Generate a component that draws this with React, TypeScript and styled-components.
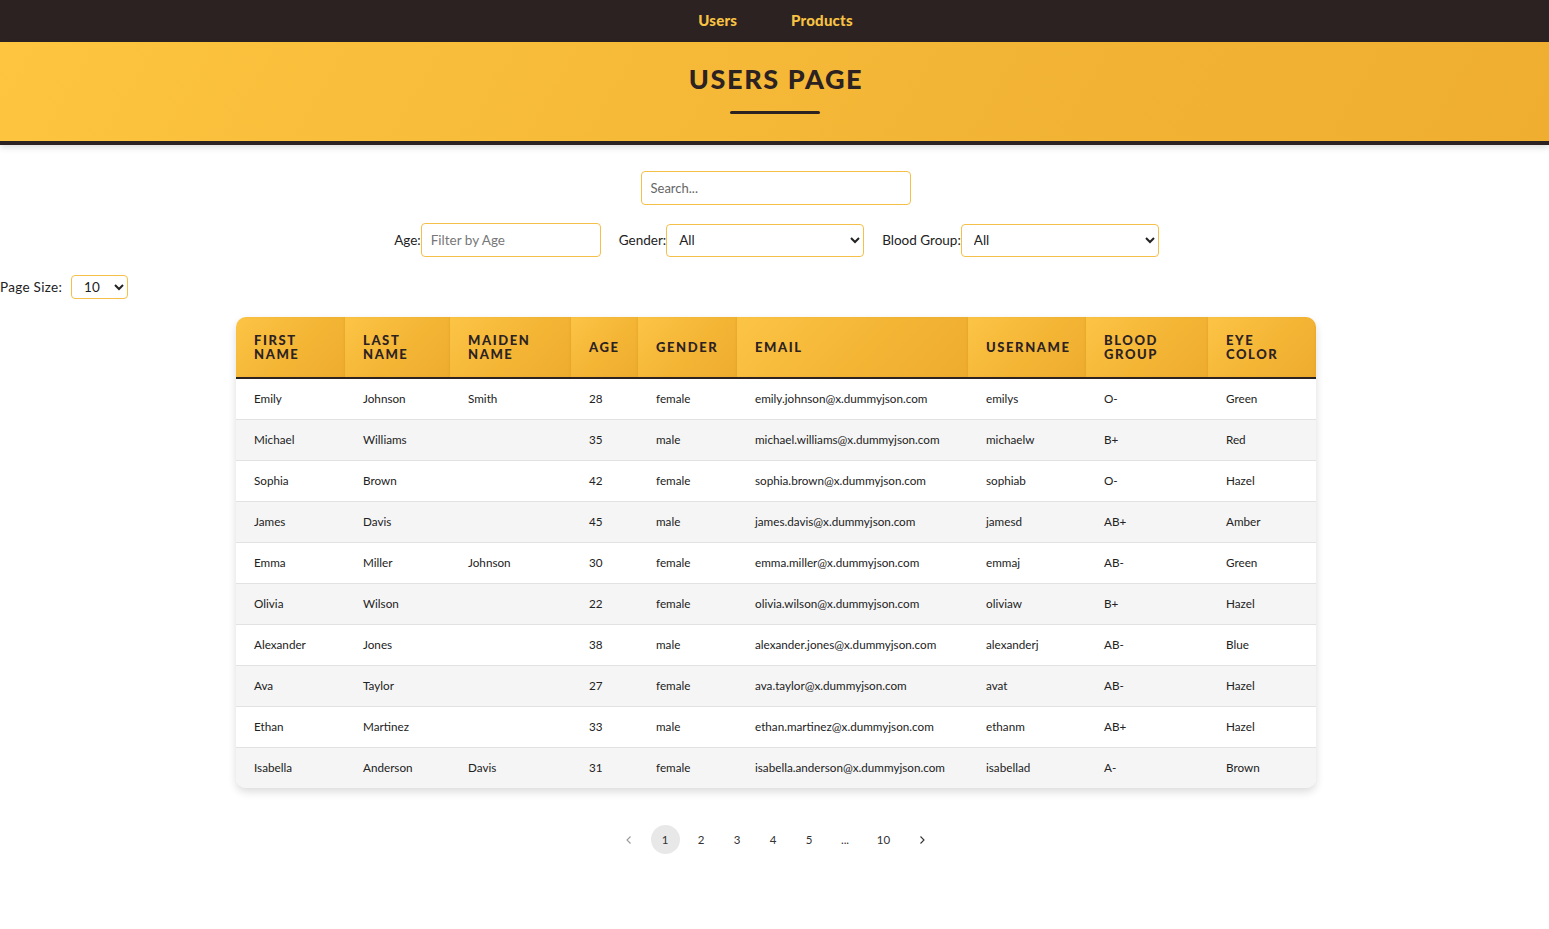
import React from "react";
import styled, { createGlobalStyle } from "styled-components";

const GlobalStyle = createGlobalStyle`
  html, body { margin: 0; padding: 0; background: #ffffff; }
  body { font-family: "Lato", "Noto Sans", sans-serif; color: #222; }
  * { box-sizing: border-box; }
`;

const Nav = styled.nav`
  height: 42px;
  background: #2c2222;
  display: flex;
  justify-content: center;
  align-items: center;
  gap: 54px;
  padding-left: 2px;
  padding-bottom: 2px;
`;

const NavLink = styled.a`
  color: #f8c244;
  font-weight: 900;
  font-size: 15px;
  text-decoration: none;
  letter-spacing: 0.2px;
`;

const Hero = styled.header`
  height: 103px;
  background: linear-gradient(120deg, #fdc540 0%, #f3b535 60%, #efae30 100%);
  border-bottom: 4px solid #2c2222;
  display: flex;
  flex-direction: column;
  align-items: center;
  padding-top: 20px;
  box-shadow: 0 3px 6px rgba(0, 0, 0, 0.12);
`;

const Title = styled.h1`
  margin: 0;
  font-size: 27px;
  font-weight: 900;
  letter-spacing: 1.6px;
  color: #2c2222;
  line-height: 34px;
  padding-left: 3px;
`;

const Underline = styled.div`
  width: 90px;
  height: 3px;
  background: #2c2222;
  margin-top: 15px;
  border-radius: 2px;
`;

const Main = styled.main`
  display: flex;
  flex-direction: column;
  align-items: center;
  padding-top: 26px;
`;

const SearchInput = styled.input`
  width: 270px;
  height: 34px;
  border: 1px solid #f5c04a;
  border-radius: 4px;
  padding: 0 9px;
  margin-left: 2px;
  font-family: "Lato", sans-serif;
  font-size: 13px;
  color: #333;
  outline: none;
  &::placeholder { color: #666; }
`;

const Filters = styled.div`
  display: flex;
  align-items: center;
  gap: 18px;
  margin-top: 18px;
  padding-left: 4px;
`;

const FilterGroup = styled.label`
  display: flex;
  align-items: center;
  font-size: 13.5px;
  color: #222;
`;

const AgeInput = styled.input`
  width: 180px;
  height: 34px;
  border: 1px solid #f5c04a;
  border-radius: 4px;
  padding: 0 9px;
  font-family: "Lato", sans-serif;
  font-size: 13.5px;
  outline: none;
  &::placeholder { color: #777; }
`;

const Select = styled.select<{ $w: number; $h: number }>`
  width: ${(p) => p.$w}px;
  height: ${(p) => p.$h}px;
  border: 1px solid #f5c04a;
  border-radius: 4px;
  padding: 0 8px;
  font-family: "Lato", sans-serif;
  font-size: 13.5px;
  color: #222;
  background: #fff;
  outline: none;
`;

const PageSizeRow = styled.div`
  align-self: flex-start;
  display: flex;
  align-items: center;
  gap: 9px;
  margin-top: 18px;
  font-size: 13.5px;
  letter-spacing: 0.3px;
`;

const TableCard = styled.div`
  width: 1080px;
  margin-top: 18px;
  margin-left: 3px;
  border-radius: 10px;
  overflow: hidden;
  box-shadow: 0 4px 8px rgba(0, 0, 0, 0.14);
`;

const Table = styled.table`
  width: 100%;
  border-collapse: collapse;
  table-layout: fixed;
`;

const Th = styled.th`
  background: linear-gradient(135deg, #fcc445 0%, #f4b535 55%, #eeac2f 100%);
  color: #2c2222;
  text-align: left;
  font-size: 13px;
  font-weight: 900;
  letter-spacing: 1.6px;
  text-transform: uppercase;
  line-height: 14px;
  padding: 0 18px;
  height: 61px;
  border-bottom: 2px solid #2c2222;
  vertical-align: middle;
  box-shadow: inset -1px 0 2px rgba(190, 130, 20, 0.15);
`;

const Tr = styled.tr<{ $alt: boolean }>`
  background: ${(p) => (p.$alt ? "#f5f5f5" : "#ffffff")};
  border-bottom: 1px solid #e2e2e2;
  &:last-child { border-bottom: none; }
`;

const Td = styled.td`
  height: 41px;
  padding: 0 18px 2px;
  font-size: 11.7px;
  color: #222;
  white-space: nowrap;
  vertical-align: middle;
`;

const Pager = styled.div`
  display: flex;
  align-items: center;
  margin-top: 37px;
  gap: 7px;
  padding-left: 2px;
`;

const PageBtn = styled.span<{ $active?: boolean; $muted?: boolean; $wide?: boolean }>`
  width: ${(p) => (p.$wide ? 34 : 29)}px;
  height: 29px;
  border-radius: 50%;
  display: flex;
  align-items: center;
  justify-content: center;
  font-size: 11.5px;
  color: ${(p) => (p.$muted ? "#999" : "#333")};
  background: ${(p) => (p.$active ? "#e8e8e8" : "transparent")};
`;

const Arrow = styled.svg`
  width: 10px;
  height: 10px;
`;

const cols = [109, 105, 121, 67, 99, 231, 118, 122, 108];
const headers = ["First Name", "Last Name", "Maiden Name", "Age", "Gender", "Email", "Username", "Blood Group", "Eye Color"];

const headerLines: React.ReactNode[] = [
  <>First<br />Name</>,
  <>Last<br />Name</>,
  <>Maiden<br />Name</>,
  "Age",
  "Gender",
  "Email",
  "Username",
  <>Blood<br />Group</>,
  <>Eye<br />Color</>,
];

const rows = [
  ["Emily", "Johnson", "Smith", "28", "female", "emily.johnson@x.dummyjson.com", "emilys", "O-", "Green"],
  ["Michael", "Williams", "", "35", "male", "michael.williams@x.dummyjson.com", "michaelw", "B+", "Red"],
  ["Sophia", "Brown", "", "42", "female", "sophia.brown@x.dummyjson.com", "sophiab", "O-", "Hazel"],
  ["James", "Davis", "", "45", "male", "james.davis@x.dummyjson.com", "jamesd", "AB+", "Amber"],
  ["Emma", "Miller", "Johnson", "30", "female", "emma.miller@x.dummyjson.com", "emmaj", "AB-", "Green"],
  ["Olivia", "Wilson", "", "22", "female", "olivia.wilson@x.dummyjson.com", "oliviaw", "B+", "Hazel"],
  ["Alexander", "Jones", "", "38", "male", "alexander.jones@x.dummyjson.com", "alexanderj", "AB-", "Blue"],
  ["Ava", "Taylor", "", "27", "female", "ava.taylor@x.dummyjson.com", "avat", "AB-", "Hazel"],
  ["Ethan", "Martinez", "", "33", "male", "ethan.martinez@x.dummyjson.com", "ethanm", "AB+", "Hazel"],
  ["Isabella", "Anderson", "Davis", "31", "female", "isabella.anderson@x.dummyjson.com", "isabellad", "A-", "Brown"],
];

export default function App() {
  return (
    <>
      <GlobalStyle />
      <Nav>
        <NavLink href="#">Users</NavLink>
        <NavLink href="#">Products</NavLink>
      </Nav>
      <Hero>
        <Title>USERS PAGE</Title>
        <Underline />
      </Hero>
      <Main>
        <SearchInput placeholder="Search..." />
        <Filters>
          <FilterGroup>
            Age:
            <AgeInput placeholder="Filter by Age" />
          </FilterGroup>
          <FilterGroup>
            Gender:
            <Select $w={198} $h={33} defaultValue="All">
              <option>All</option>
              <option>male</option>
              <option>female</option>
            </Select>
          </FilterGroup>
          <FilterGroup>
            Blood Group:
            <Select $w={198} $h={33} defaultValue="All">
              <option>All</option>
            </Select>
          </FilterGroup>
        </Filters>
        <PageSizeRow>
          Page Size:
          <Select $w={57} $h={24} defaultValue="10">
            <option>5</option>
            <option>10</option>
            <option>20</option>
          </Select>
        </PageSizeRow>
        <TableCard>
          <Table>
            <colgroup>
              {cols.map((w, i) => (
                <col key={i} style={{ width: w }} />
              ))}
            </colgroup>
            <thead>
              <tr>
                {headerLines.map((h, i) => (
                  <Th key={headers[i]}>{h}</Th>
                ))}
              </tr>
            </thead>
            <tbody>
              {rows.map((r, i) => (
                <Tr key={i} $alt={i % 2 === 1}>
                  {r.map((c, j) => (
                    <Td key={j}>{c}</Td>
                  ))}
                </Tr>
              ))}
            </tbody>
          </Table>
        </TableCard>
        <Pager>
          <PageBtn $muted>
            <Arrow viewBox="0 0 10 10">
              <path d="M6.5 1.5 L3 5 L6.5 8.5" fill="none" stroke="#999" strokeWidth="1.1" />
            </Arrow>
          </PageBtn>
          <PageBtn $active>1</PageBtn>
          <PageBtn>2</PageBtn>
          <PageBtn>3</PageBtn>
          <PageBtn>4</PageBtn>
          <PageBtn>5</PageBtn>
          <PageBtn>...</PageBtn>
          <PageBtn $wide>10</PageBtn>
          <PageBtn>
            <Arrow viewBox="0 0 10 10">
              <path d="M3.5 1.5 L7 5 L3.5 8.5" fill="none" stroke="#333" strokeWidth="1.1" />
            </Arrow>
          </PageBtn>
        </Pager>
      </Main>
    </>
  );
}
